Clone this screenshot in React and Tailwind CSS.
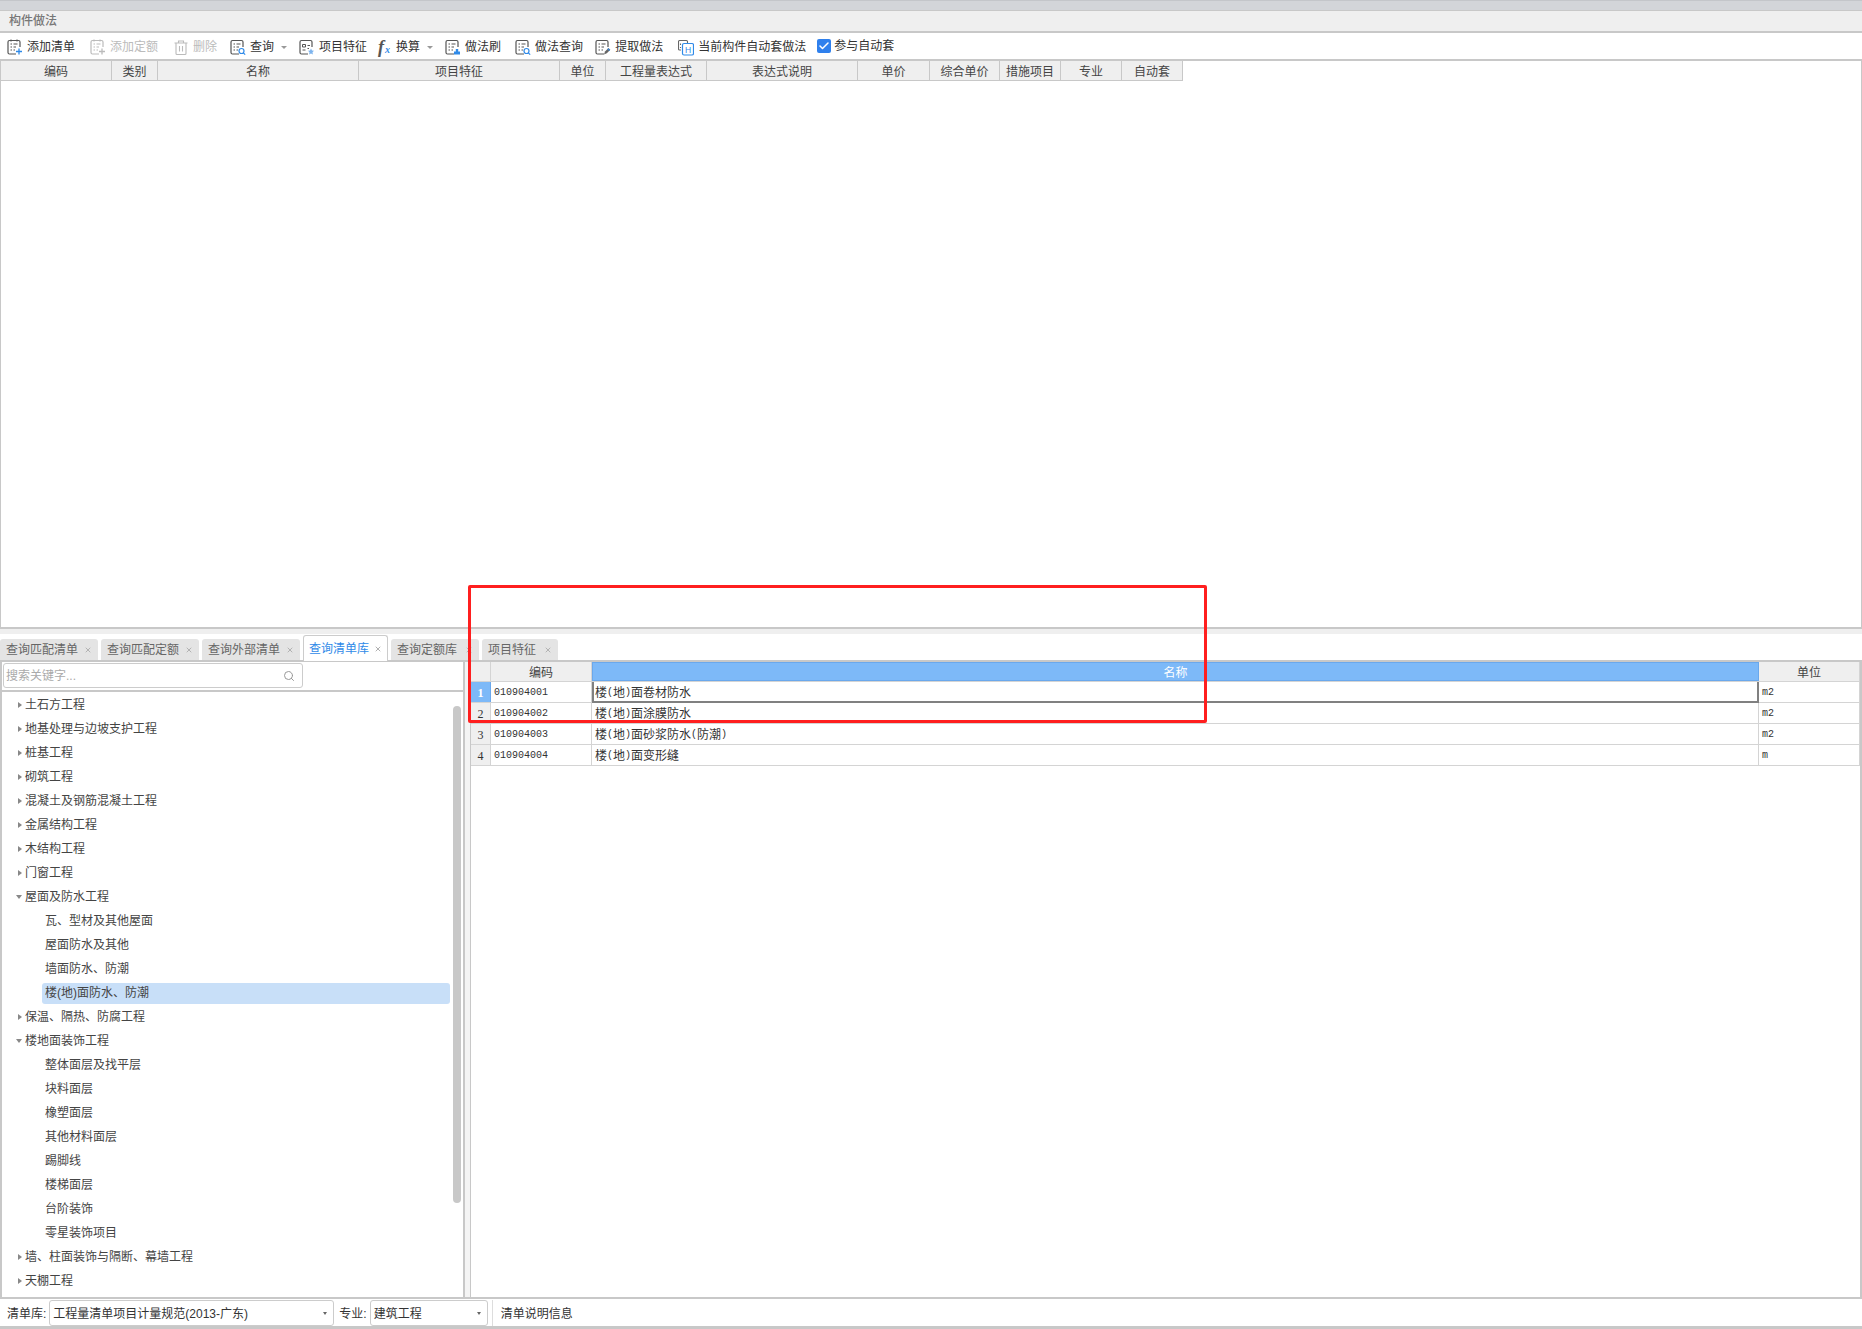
import { Search, Check, X } from "lucide-react";

const columns = [
  ["编码", "w-[111px]"],
  ["类别", "w-[46px]"],
  ["名称", "w-[201px]"],
  ["项目特征", "w-[201px]"],
  ["单位", "w-[46px]"],
  ["工程量表达式", "w-[101px]"],
  ["表达式说明", "w-[151px]"],
  ["单价", "w-[72px]"],
  ["综合单价", "w-[70px]"],
  ["措施项目", "w-[61px]"],
  ["专业", "w-[61px]"],
  ["自动套", "w-[61px]"],
];

const tabs = [
  { label: "查询匹配清单", width: "w-[98px]" },
  { label: "查询匹配定额", width: "w-[98px]" },
  { label: "查询外部清单", width: "w-[98px]" },
  { label: "查询清单库", width: "w-[85px]", active: true },
  { label: "查询定额库", width: "w-[88px]" },
  { label: "项目特征", width: "w-[76px]" },
];

// [label, level, open]
const tree = [
  ["土石方工程", 0],
  ["地基处理与边坡支护工程", 0],
  ["桩基工程", 0],
  ["砌筑工程", 0],
  ["混凝土及钢筋混凝土工程", 0],
  ["金属结构工程", 0],
  ["木结构工程", 0],
  ["门窗工程", 0],
  ["屋面及防水工程", 0, true],
  ["瓦、型材及其他屋面", 1],
  ["屋面防水及其他", 1],
  ["墙面防水、防潮", 1],
  ["楼(地)面防水、防潮", 1],
  ["保温、隔热、防腐工程", 0],
  ["楼地面装饰工程", 0, true],
  ["整体面层及找平层", 1],
  ["块料面层", 1],
  ["橡塑面层", 1],
  ["其他材料面层", 1],
  ["踢脚线", 1],
  ["楼梯面层", 1],
  ["台阶装饰", 1],
  ["零星装饰项目", 1],
  ["墙、柱面装饰与隔断、幕墙工程", 0],
  ["天棚工程", 0],
];

const rows = [
  ["1", "010904001", "楼(地)面卷材防水", "m2"],
  ["2", "010904002", "楼(地)面涂膜防水", "m2"],
  ["3", "010904003", "楼(地)面砂浆防水(防潮)", "m2"],
  ["4", "010904004", "楼(地)面变形缝", "m"],
];

// ascii in the grid is half width (6px), cjk stays 12px
function GridText({ text }) {
  return text.split(/([\x00-\x7f]+)/).map((part, i) =>
    /^[\x00-\x7f]+$/.test(part) ? (
      <span key={i} className="font-['Liberation_Mono',monospace] text-[10px]">
        {part}
      </span>
    ) : (
      <span key={i}>{part}</span>
    )
  );
}

function DocIcon({ color = "#555", children, lines = true }) {
  return (
    <svg width="16" height="17" viewBox="0 0 16 17" fill="none" className="shrink-0">
      <path
        d="M9 15H2.5A1.5 1.5 0 0 1 1 13.5V3A1.5 1.5 0 0 1 2.5 1.500H11.500A1.500 1.500 0 0 1 13 3V8"
        stroke={color}
        strokeWidth="1.2"
      />
      {lines && (
        <path d="M3.500 5H5M6.500 5H10.500M3.500 8H5M6.500 8H9M3.500 11H5M6.500 11H8" stroke={color} strokeWidth="1.1" />
      )}
      {children}
    </svg>
  );
}

const BLUE = "#2f8ae8";

const LensBadge = () => (
  <>
    <circle cx="11.500" cy="12" r="2.500" stroke={BLUE} strokeWidth="1.200" fill="#fff" />
    <path d="M13.300 13.800L15.200 15.700" stroke={BLUE} strokeWidth="1.200" />
  </>
);

function AddIcon({ color = "#555", plus = BLUE }) {
  return (
    <DocIcon color={color}>
      <path d="M4 0.500V2.500M10 0.500V2.500" stroke={color} strokeWidth="1.100" />
      <path d="M12 9.500V15.500M9 12.500H15" stroke={plus} strokeWidth="1.300" />
    </DocIcon>
  );
}

function TrashIcon() {
  return (
    <svg width="16" height="17" viewBox="0 0 16 17" fill="none" stroke="#bbb" strokeWidth="1.100" className="shrink-0">
      <path d="M1.500 4H14.500M5.500 4V2H10.500V4M3 4V14.500A1 1 0 0 0 4 15.500H12A1 1 0 0 0 13 14.500V4M6.500 7V12.500M9.500 7V12.500" />
    </svg>
  );
}

function FeatureIcon() {
  return (
    <DocIcon lines={false}>
      <path d="M3.500 5.500H6.500V8H3.500ZM3.500 11H6.500M8.500 6.500H11M8.500 9.500H10" stroke="#555" strokeWidth="1" />
      <path d="M12 9.500L13 11.500L15 11.800L13.500 13.300L13.900 15.500L12 14.400L10.100 15.500L10.500 13.300L9 11.800L11 11.500Z" fill="#7db4ee" />
    </DocIcon>
  );
}

function BrushIcon() {
  return (
    <DocIcon>
      <path d="M9 15.500V12.500H10.800V10H13.200V12.500H15V15.500Z" fill={BLUE} />
    </DocIcon>
  );
}

function PickIcon() {
  return (
    <DocIcon>
      <path d="M9 15.500L10 12.500L13.500 9L15.300 10.800L11.800 14.300Z" fill="#666" />
      <path d="M12.800 9.700L14.600 11.500" stroke={BLUE} strokeWidth="1.200" />
    </DocIcon>
  );
}

function AutoIcon() {
  return (
    <svg width="16" height="17" viewBox="0 0 16 17" fill="none" className="shrink-0">
      <path d="M3 11H1.500A1 1 0 0 1 .5 10V2.500A1 1 0 0 1 1.500 1.500H8.500A1 1 0 0 1 9.500 2.500V4" stroke="#666" strokeWidth="1.100" />
      <path d="M2.500 4.500V6M2.500 8V9" stroke="#666" strokeWidth="1.100" />
      <rect x="4.500" y="4.500" width="11" height="11.500" rx="1.500" stroke={BLUE} strokeWidth="1.200" />
      <text x="10" y="13.500" textAnchor="middle" fontSize="8.500" fontFamily="Liberation Sans" fill={BLUE}>
        H
      </text>
    </svg>
  );
}

function FxIcon() {
  return (
    <span className="flex h-[16px] w-[14px] shrink-0 items-center font-['Liberation_Serif',serif] italic leading-none">
      <span className="text-[18px] font-bold text-[#555]">f</span>
      <span className="ml-[1px] mt-[6px] text-[10px] font-bold text-[#2f8ae8]">x</span>
    </span>
  );
}

function Caret() {
  return <span className="ml-[7px] h-0 w-0 border-x-[3px] border-t-[3px] border-x-transparent border-t-[#999]" />;
}

function ToolButton({ icon, label, caret, disabled, className = "" }) {
  return (
    <div className={`flex items-center ${disabled ? "text-[#bbb]" : "text-[#333]"} ${className}`}>
      {icon}
      <span className="ml-[4px] whitespace-nowrap">{label}</span>
      {caret && <Caret />}
    </div>
  );
}

function TreeArrow({ open }) {
  return open ? (
    <span className="h-0 w-0 border-x-[3.5px] border-t-[4px] border-x-transparent border-t-[#888]" />
  ) : (
    <span className="ml-[2px] h-0 w-0 border-y-[3.5px] border-l-[4px] border-y-transparent border-l-[#888]" />
  );
}

function SelectBox({ text, className }) {
  return (
    <div className={`flex h-[26px] items-center justify-between rounded-[3px] border border-[#ccc] pl-[3px] pr-[6px] pt-[1px] text-[#333] ${className}`}>
      <span className="whitespace-nowrap">{text}</span>
      <span className="h-0 w-0 border-x-[2.500px] border-t-[3px] border-x-transparent border-t-[#666]" />
    </div>
  );
}

export default function App() {
  return (
    <div className="relative flex h-[1329px] w-[1862px] flex-col overflow-hidden bg-white font-['Liberation_Sans','Noto_Sans_CJK_SC',sans-serif] text-[12px] leading-none">
      {/* top strip + title */}
      <div className="h-[10px] border-t border-[#c4c6ca] bg-[#d3d5d9]" />
      <div className="flex h-[21px] items-center border-t border-[#c8c8c8] bg-[#efefef] pl-[9px] font-medium text-[#777]">
        构件做法
      </div>

      {/* toolbar */}
      <div className="flex h-[30px] items-center border-y-2 border-[#c8c8c8] pl-[7px] pt-[2px]">
        <ToolButton icon={<AddIcon />} label="添加清单" />
        <ToolButton icon={<AddIcon color="#bbb" plus="#bbb" />} label="添加定额" disabled className="ml-[15px]" />
        <ToolButton icon={<TrashIcon />} label="删除" disabled className="ml-[15px]" />
        <ToolButton icon={<DocIcon><LensBadge /></DocIcon>} label="查询" caret className="ml-[13px]" />
        <ToolButton icon={<FeatureIcon />} label="项目特征" className="ml-[12px]" />
        <ToolButton icon={<FxIcon />} label="换算" caret className="ml-[11px]" />
        <ToolButton icon={<BrushIcon />} label="做法刷" className="ml-[12px]" />
        <ToolButton icon={<DocIcon><LensBadge /></DocIcon>} label="做法查询" className="ml-[14px]" />
        <ToolButton icon={<PickIcon />} label="提取做法" className="ml-[12px]" />
        <ToolButton icon={<AutoIcon />} label="当前构件自动套做法" className="ml-[15px]" />
        <div className="ml-[11px] flex -translate-y-[1px] items-center text-[#333]">
          <span className="flex h-[14px] w-[14px] items-center justify-center rounded-[2px] bg-[#2f80ed]">
            <Check size={12} strokeWidth={3} color="#fff" />
          </span>
          <span className="ml-[3px]">参与自动套</span>
        </div>
      </div>

      {/* upper table */}
      <div className="flex h-[568px] flex-col items-start border-x border-b-2 border-[#c8c8c8]">
        <div className="flex h-[20px] border-b border-[#c8c8c8] bg-[#efefef] text-[#444]">
          {columns.map(([label, width]) => (
            <div key={label} className={`flex items-center justify-center border-r border-[#c8c8c8] pt-[2px] ${width}`}>
              {label}
            </div>
          ))}
        </div>
      </div>
      <div className="h-[5px] bg-[#efefef]" />

      {/* tabs */}
      <div className="flex h-[26px] items-end gap-[3px]">
        {tabs.map((tab) =>
          tab.active ? (
            <div key={tab.label} className={`relative top-[1px] flex h-[26px] items-center justify-between rounded-t-[3px] border-x border-t border-[#ccc] bg-white pl-[5px] pr-[5px] text-[#2f8ae8] ${tab.width}`}>
              {tab.label}
              <X size={8} color="#888" />
            </div>
          ) : (
            <div key={tab.label} className={`flex h-[21px] items-center justify-between rounded-t-[3px] bg-[#e4e4e4] pl-[6px] pr-[6px] text-[#666] ${tab.width}`}>
              {tab.label}
              <X size={8} color="#999" />
            </div>
          )
        )}
      </div>

      {/* lower panels */}
      <div className="flex min-h-0 flex-1 border-t-2 border-[#c8c8c8]">
        <div className="flex w-[465px] shrink-0 flex-col border-x-2 border-[#c8c8c8]">
          <div className="h-[30px] border-b-2 border-[#c8c8c8] pl-[1px] pt-[1px]">
            <div className="flex h-[25px] w-[300px] items-center justify-between rounded-[3px] border border-[#ccc] pl-[2px] pr-[7px] pt-[1px] text-[#aaa]">
              搜索关键字...
              <Search size={12} color="#999" />
            </div>
          </div>
          <div className="relative min-h-0 flex-1 overflow-hidden pt-[1px]">
            {tree.map(([label, level, open]) =>
              level === 0 ? (
                <div key={label} className="flex h-[24px] items-center text-[#444]">
                  <span className="flex w-[23px] shrink-0 justify-end pr-[3px]">
                    <TreeArrow open={open} />
                  </span>
                  {label}
                </div>
              ) : (
                <div key={label} className="flex h-[24px] items-center pl-[40px] text-[#444]">
                  <div className={`flex h-[21px] w-[408px] items-center rounded-[3px] pl-[3px] ${label === "楼(地)面防水、防潮" ? "bg-[#c8dff8]" : ""}`}>
                    {label}
                  </div>
                </div>
              )
            )}
            <div className="absolute left-[451px] top-[14px] h-[497px] w-[8px] rounded bg-[#c8c8c8]" />
          </div>
        </div>

        <div className="w-[5px] shrink-0 bg-[#f4f4f4]" />

        <div className="min-w-0 flex-1 border-x-2 border-l border-[#c8c8c8]">
          <div className="grid h-[20px] grid-cols-[20px_101px_1167px_101px] border-b border-[#d4d4d4] text-[#444]">
            <div className="border-r border-[#d4d4d4] bg-[#efefef]" />
            <div className="flex items-center justify-center border-r border-[#d4d4d4] bg-[#efefef] pt-[2px]">编码</div>
            <div className="flex items-center justify-center border border-[#6aa8ec] bg-[#7db9f8] pt-[2px] text-white">名称</div>
            <div className="flex items-center justify-center border-r border-[#d4d4d4] bg-[#efefef] pt-[2px]">单位</div>
          </div>
          {rows.map(([no, code, name, unit], i) => (
            <div key={no} className="grid h-[21px] grid-cols-[20px_101px_1167px_101px] border-b border-[#d4d4d4] pt-0 text-[#333]">
              <div className={`flex items-center justify-center border-r pt-[2px] font-['Liberation_Serif',serif] ${i === 0 ? "border-[#6aa8ec] bg-[#7db9f8] font-bold text-white" : "border-[#d4d4d4] bg-[#efefef]"}`}>
                {no}
              </div>
              <div className="flex items-center border-r border-[#d4d4d4] pl-[3px] pt-[2px] font-['Liberation_Mono',monospace] text-[10px]">
                {code}
              </div>
              <div className={`flex items-center pt-[2px] ${i === 0 ? "-mb-[1px] border-x-2 border-b-2 border-[#808080] pl-[1px]" : "border-r border-[#d4d4d4] pl-[3px]"}`}>
                <GridText text={name} />
              </div>
              <div className="flex items-center border-r border-[#d4d4d4] pl-[3px] pt-[2px] font-['Liberation_Mono',monospace] text-[10px]">
                {unit}
              </div>
            </div>
          ))}
        </div>
      </div>

      {/* bottom bar */}
      <div className="flex h-[32px] shrink-0 items-start border-y-2 border-b-[3px] border-[#c8c8c8] pl-[7px] pt-[1px] text-[#333]">
        <span className="mr-[3px] mt-[8px]">清单库:</span>
        <SelectBox text="工程量清单项目计量规范(2013-广东)" className="w-[285px]" />
        <span className="ml-[5px] mr-[3px] mt-[8px]">专业:</span>
        <SelectBox text="建筑工程" className="w-[118px]" />
        <div className="ml-[4px] h-[26px] w-px bg-[#ddd]" />
        <span className="ml-[8px] mt-[8px]">清单说明信息</span>
      </div>

      {/* red annotation box drawn over the screenshot */}
      <div className="absolute left-[468px] top-[585px] h-[138px] w-[739px] rounded-[2px] border-[3px] border-[#ff1f1f]" />
    </div>
  );
}
